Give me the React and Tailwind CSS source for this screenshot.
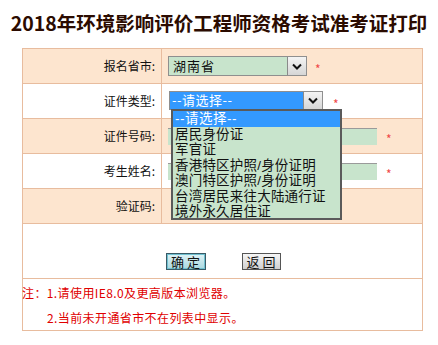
function Chevron() {
  return (
    <svg width="10" height="7" viewBox="0 0 10 7">
      <path d="M1 1.5 L5 5.5 L9 1.5" fill="none" stroke="#111" strokeWidth="2" />
    </svg>
  );
}

function ArrowBtn() {
  return (
    <div className="w-[19px] h-full flex items-center justify-center bg-gradient-to-b from-[#f4f4f4] to-[#d6d6d6] border-l border-[#8a8a8a]">
      <Chevron />
    </div>
  );
}

function Star({ className = "" }) {
  return <span className={"text-[#f04848] text-[12px] leading-none mt-[6px] " + className}>*</span>;
}

function Row({ label, bg, children }) {
  return (
    <div className={"flex h-[35px] border-b border-[#e8bc9e] " + bg}>
      <div className="w-[139px] shrink-0 border-r border-[#e8bc9e] flex items-center justify-end pr-[6px] text-[12px] text-[#111]">
        {label}
      </div>
      <div className="flex-1 flex items-center">{children}</div>
    </div>
  );
}

const items = [
  "居民身份证",
  "军官证",
  "香港特区护照/身份证明",
  "澳门特区护照/身份证明",
  "台湾居民来往大陆通行证",
  "境外永久居住证",
];

export default function App() {
  return (
    <div className="w-[438px] h-[345px] bg-white font-['Noto_Sans_CJK_SC',sans-serif] overflow-hidden">
      <h1 className="h-[48px] flex items-center justify-center pb-[3px] text-[19.5px] font-bold text-[#2b0b00]">
        2018年环境影响评价工程师资格考试准考证打印
      </h1>
      <div className="ml-[22px] w-[401px] border border-[#e8bc9e] relative">
        <Row label="报名省市:" bg="bg-[#fde5cf]">
          <div className="ml-[6px] w-[139px] h-[20px] flex border border-[#8f8f8f] bg-[#c8e4cc]">
            <div className="flex-1 flex items-center pl-[4px] text-[13px] text-[#111] tracking-[1px]">湖南省</div>
            <ArrowBtn />
          </div>
          <Star className="ml-[8px]" />
        </Row>
        <Row label="证件类型:" bg="bg-white">
          <div className="ml-[7px] mt-[-2px] w-[154px] h-[19px] flex border border-[#8f8f8f] bg-[#c8e4cc]">
            <div className="flex-1 flex items-center pl-[2px] text-[13px] text-white bg-[#3399ff] tracking-[0.5px]">--请选择--</div>
            <ArrowBtn />
          </div>
          <Star className="ml-[10px]" />
        </Row>
        <Row label="证件号码:" bg="bg-[#fde5cf]">
          <div className="ml-[6px] w-[209px] h-[17px] bg-[#c8e4cc] border-t border-[#9a9a9a]" />
          <Star className="ml-[9px]" />
        </Row>
        <Row label="考生姓名:" bg="bg-white">
          <div className="ml-[6px] w-[209px] h-[17px] bg-[#c8e4cc] border-t border-[#9a9a9a]" />
          <Star className="ml-[9px]" />
        </Row>
        <Row label="验证码:" bg="bg-[#fde5cf]" />
        <div className="h-[55px] border-b border-[#e8bc9e] flex justify-center items-start pt-[29px] gap-[36px] pl-[1px]">
          <button className="w-[40px] h-[17px] flex items-center justify-center text-[13px] leading-none text-[#111] border border-[#3a5a66] bg-gradient-to-b from-[#dff3f6] to-[#a9d8e0] shadow-[inset_0_0_0_1px_#6fc0d0] tracking-[3px] pl-[3px]">
            确定
          </button>
          <button className="w-[39px] h-[17px] flex items-center justify-center text-[13px] leading-none text-[#111] border border-[#555] bg-gradient-to-b from-[#f6f6f6] to-[#cfcfcf] tracking-[3px] pl-[3px]">
            返回
          </button>
        </div>
        <div className="h-[51px] pt-[0.5px] text-[12px] leading-[25px] text-[#e00000] tracking-[0.4px]">
          <div className="ml-[-1px]">注：1.请使用IE8.0及更高版本浏览器。</div>
          <div className="ml-[24px]">2.当前未开通省市不在列表中显示。</div>
        </div>

        <div className="absolute left-[148px] top-[60px] w-[171px] h-[111px] border-2 border-[#5a5a5a] bg-[#c8e4cc] font-['Liberation_Sans','Noto_Sans_CJK_SC',sans-serif] text-[13.5px] leading-[15.5px] text-[#111]">
          <div className="bg-[#3399ff] text-white pl-[2px] tracking-[0.5px]">--请选择--</div>
          {items.map((t) => (
            <div key={t} className="pl-[2px] tracking-[0.2px] whitespace-nowrap">
              {t}
            </div>
          ))}
        </div>
      </div>
    </div>
  );
}
